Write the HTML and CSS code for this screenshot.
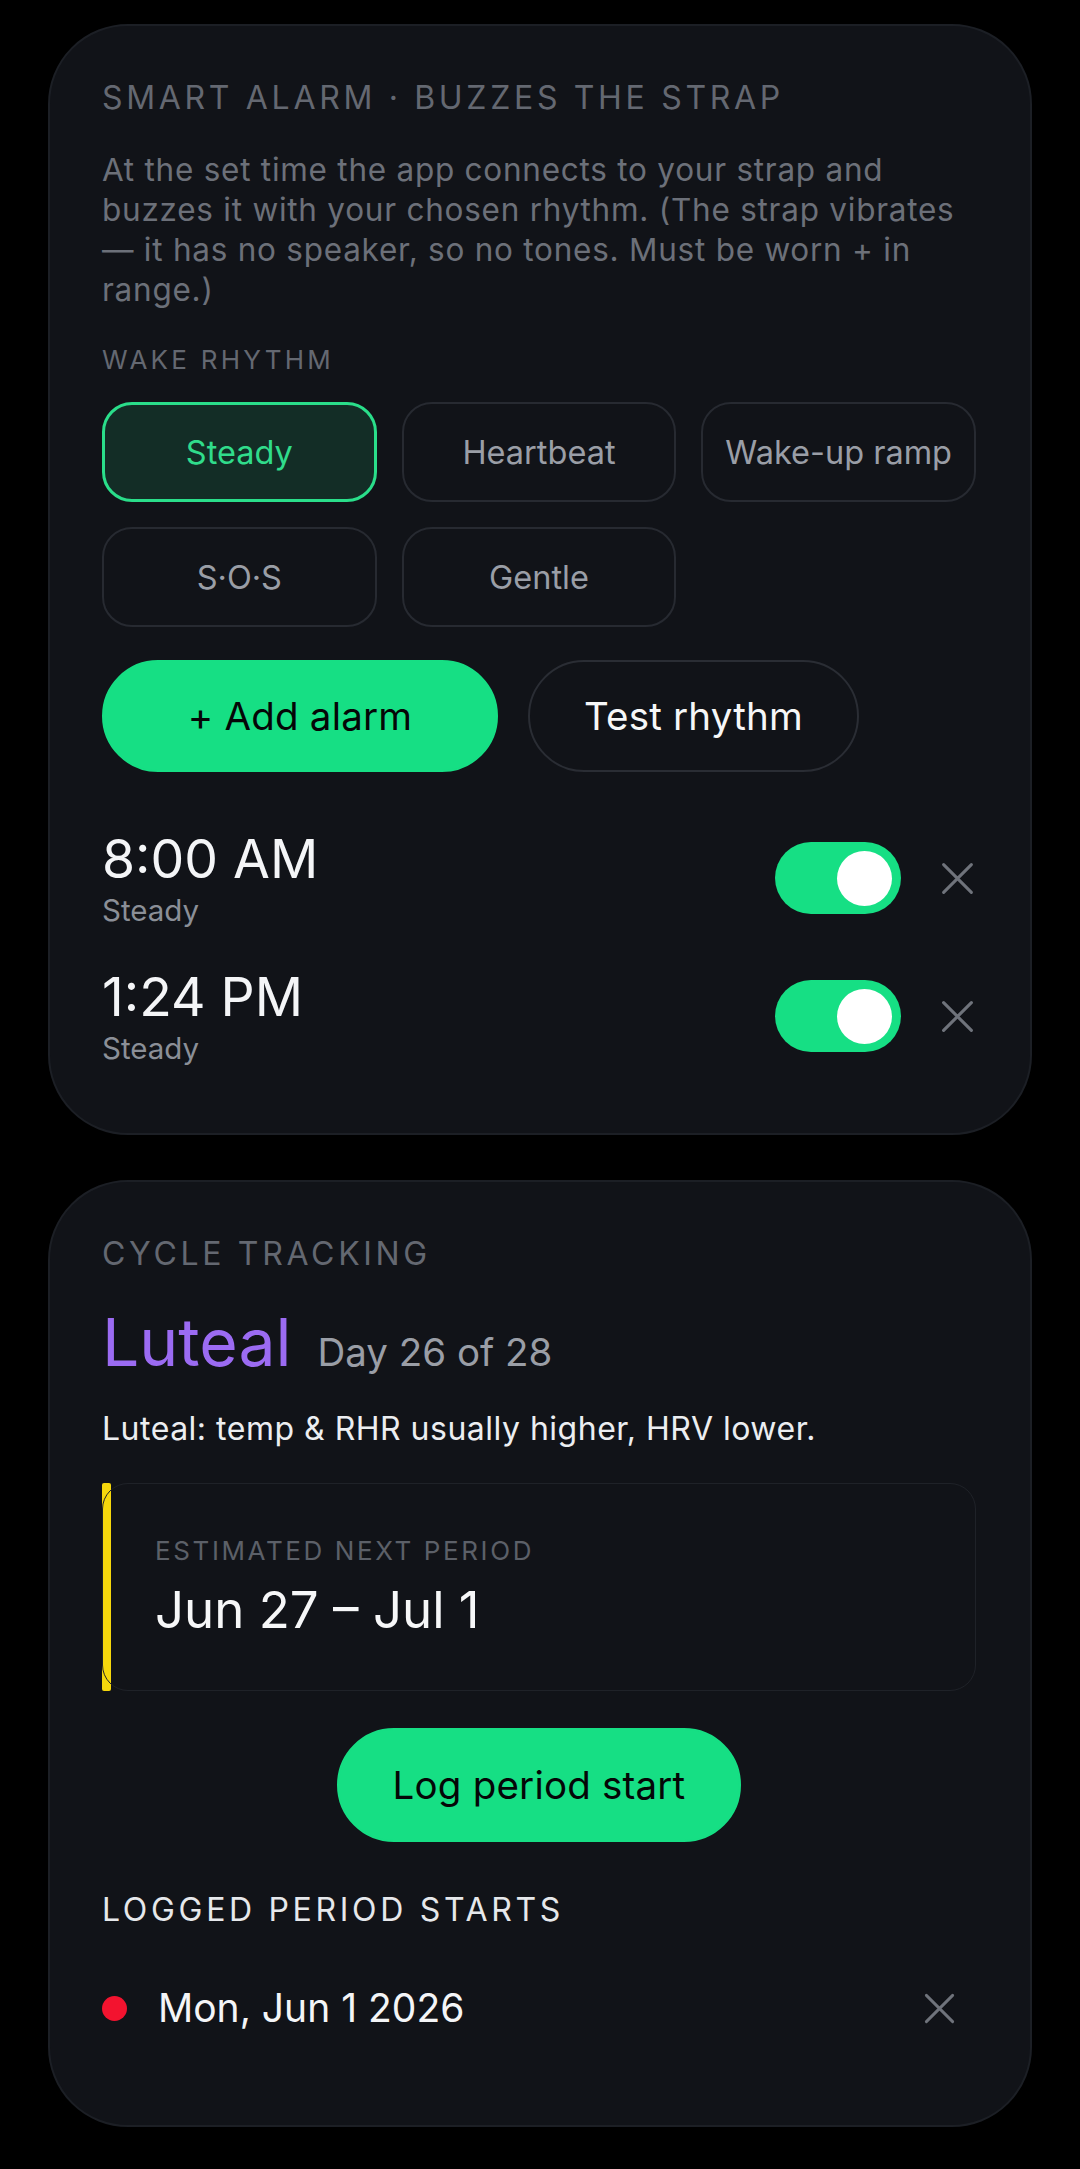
FILE: index.html
```html
<!DOCTYPE html>
<html lang="en">
<head>
  <meta charset="UTF-8">
  <meta name="viewport" content="width=device-width, initial-scale=1.0">
  <title>Smart Alarm &amp; Cycle Tracking</title>
  <link rel="stylesheet" href="styles.css">
</head>
<body>
  <main class="screen">
    <!-- Smart alarm -->
    <section class="card">
      <h2 class="eyebrow">Smart alarm · buzzes the strap</h2>
      <p class="intro">At the set time the app connects to your strap and buzzes it with your chosen rhythm. (The strap vibrates — it has no speaker, so no tones. Must be worn + in range.)</p>
      <h3 class="label">Wake rhythm</h3>
      <div class="rhythms">
        <button class="chip chip-on">Steady</button>
        <button class="chip">Heartbeat</button>
        <button class="chip">Wake-up ramp</button>
        <button class="chip">S·O·S</button>
        <button class="chip">Gentle</button>
      </div>
      <div class="actions">
        <button class="btn btn-primary btn-wide">+ Add alarm</button>
        <button class="btn btn-ghost">Test rhythm</button>
      </div>
      <ul class="alarms">
        <li class="alarm">
          <div class="alarm-info">
            <div class="alarm-time">8:00 AM</div>
            <div class="alarm-rhythm">Steady</div>
          </div>
          <div class="alarm-controls">
            <span class="toggle toggle-on"><span class="knob"></span></span>
            <button class="icon-x" aria-label="Delete alarm">
              <svg viewBox="0 0 24 24" width="37" height="37"><path d="M3 3L21 21M21 3L3 21" stroke="currentColor" stroke-width="2" stroke-linecap="round"/></svg>
            </button>
          </div>
        </li>
        <li class="alarm">
          <div class="alarm-info">
            <div class="alarm-time">1:24 PM</div>
            <div class="alarm-rhythm">Steady</div>
          </div>
          <div class="alarm-controls">
            <span class="toggle toggle-on"><span class="knob"></span></span>
            <button class="icon-x" aria-label="Delete alarm">
              <svg viewBox="0 0 24 24" width="37" height="37"><path d="M3 3L21 21M21 3L3 21" stroke="currentColor" stroke-width="2" stroke-linecap="round"/></svg>
            </button>
          </div>
        </li>
      </ul>
    </section>

    <!-- Cycle tracking -->
    <section class="card">
      <h2 class="eyebrow">Cycle tracking</h2>
      <div class="phase">
        <span class="phase-name">Luteal</span>
        <span class="phase-day">Day 26 of 28</span>
      </div>
      <p class="note">Luteal: temp &amp; RHR usually higher, HRV lower.</p>
      <div class="estimate">
        <div class="estimate-label">Estimated next period</div>
        <div class="estimate-value">Jun 27 – Jul 1</div>
      </div>
      <div class="center">
        <button class="btn btn-primary">Log period start</button>
      </div>
      <h3 class="eyebrow eyebrow-light">Logged period starts</h3>
      <ul class="logged">
        <li class="logged-row">
          <span class="dot"></span>
          <span class="logged-date">Mon, Jun 1 2026</span>
          <button class="icon-x icon-x-pad" aria-label="Remove">
            <svg viewBox="0 0 24 24" width="35" height="35"><path d="M3 3L21 21M21 3L3 21" stroke="currentColor" stroke-width="2" stroke-linecap="round"/></svg>
          </button>
        </li>
      </ul>
    </section>
  </main>
</body>
</html>
```

FILE: styles.css
```css
html, body {
  margin: 0;
  padding: 0;
  background: #000;
}
body {
  font-family: "Inter", "Noto Sans", sans-serif;
  color: #f2f3f5;
}
.screen {
  padding: 24px 48px 45px;
  display: flex;
  flex-direction: column;
  gap: 45px;
}
.card {
  background: #111318;
  border: 2px solid #1c1f25;
  border-radius: 80px;
  padding: 52px 54px 48px 52px;
  isolation: isolate;
}
h2, h3, p, ul {
  margin: 0;
  padding: 0;
  font-weight: 400;
}
ul {
  list-style: none;
}
button {
  font-family: inherit;
  cursor: pointer;
}
.eyebrow {
  font-size: 32px;
  line-height: 40px;
  letter-spacing: 0.115em;
  text-transform: uppercase;
  color: #646871;
}
.eyebrow-light {
  color: #e6e8eb;
  margin-top: 48px;
}
.intro {
  margin-top: 32px;
  max-width: 865px;
  font-size: 31.5px;
  line-height: 40px;
  letter-spacing: 0.75px;
  color: #6c7079;
}
.label {
  margin-top: 30px;
  font-size: 26px;
  line-height: 40px;
  letter-spacing: 0.125em;
  text-transform: uppercase;
  color: #646871;
}
.rhythms {
  margin-top: 22px;
  display: grid;
  grid-template-columns: repeat(3, 1fr);
  gap: 25px;
}
.chip {
  height: 100px;
  border-radius: 30px;
  border: 2px solid #272a31;
  background: transparent;
  color: #9a9ea6;
  font-size: 32.5px;
  padding: 0;
}
.chip-on {
  border: 3px solid #2ade8a;
  background: #132d26;
  color: #30dc8b;
}
.actions {
  margin-top: 33px;
  display: flex;
  gap: 30px;
}
.btn {
  height: 112px;
  border-radius: 56px;
  font-size: 38.5px;
  letter-spacing: 0.2px;
  padding: 0 54px;
  border: 2px solid transparent;
}
.btn-primary {
  background: #16df84;
  color: #050607;
  border-color: #16df84;
}
.btn-wide {
  min-width: 396px;
}
.btn-ghost {
  background: transparent;
  color: #f6f7f8;
  border-color: #2a2d34;
}
.alarms {
  margin-top: 37px;
}
.alarm {
  display: flex;
  align-items: center;
  justify-content: space-between;
  padding: 20px 0;
}
.alarm-time {
  font-size: 53.5px;
  line-height: 60px;
  color: #f4f5f7;
}
.alarm-rhythm {
  margin-top: 4px;
  font-size: 29.5px;
  line-height: 34px;
  color: #8b8f97;
}
.alarm-controls {
  display: flex;
  align-items: center;
  gap: 38px;
}
.toggle {
  width: 126px;
  height: 72px;
  border-radius: 36px;
  background: #2a2d34;
  display: flex;
  align-items: center;
  padding: 0 9px;
  box-sizing: border-box;
}
.toggle-on {
  background: #16df84;
  justify-content: flex-end;
}
.knob {
  width: 55px;
  height: 55px;
  border-radius: 50%;
  background: #fff;
}
.icon-x {
  background: none;
  border: none;
  padding: 0;
  color: #6f737b;
  display: flex;
}
.icon-x-pad {
  margin-left: auto;
  padding: 0 19px;
}
.phase {
  margin-top: 28px;
  display: flex;
  align-items: baseline;
  gap: 26px;
  height: 80px;
}
.phase-name {
  font-size: 66px;
  line-height: 80px;
  color: #9b6bf2;
}
.phase-day {
  font-size: 38.5px;
  line-height: 40px;
  color: #9a9ea6;
}
.note {
  margin-top: 27px;
  font-size: 32px;
  line-height: 40px;
  letter-spacing: 0.5px;
  color: #eceef1;
}
.estimate {
  position: relative;
  margin-top: 34px;
  border: 1px solid #1f2228;
  border-radius: 26px;
  padding: 49px 40px 50px 52px;
}
/* yellow accent sits under the box border */
.estimate::before {
  content: "";
  position: absolute;
  left: -1px;
  top: -1px;
  bottom: -1px;
  width: 9px;
  border-radius: 2px;
  background: #f5d70c;
  z-index: -1;
}
.estimate-label {
  font-size: 26px;
  line-height: 36px;
  letter-spacing: 0.1em;
  text-transform: uppercase;
  color: #5c6068;
}
.estimate-value {
  margin-top: 11px;
  font-size: 51px;
  line-height: 60px;
  color: #f6f7f8;
}
.center {
  margin-top: 37px;
  display: flex;
  justify-content: center;
}
.center .btn {
  height: 114px;
  border-radius: 57px;
}
.logged {
  margin-top: 37px;
  padding-bottom: 28px;
}
.logged-row {
  display: flex;
  align-items: center;
  padding: 18px 0;
}
.dot {
  width: 25px;
  height: 25px;
  border-radius: 50%;
  background: #f3132f;
  margin-right: 31px;
}
.logged-date {
  font-size: 39px;
  line-height: 46px;
  color: #f4f5f7;
}
```
